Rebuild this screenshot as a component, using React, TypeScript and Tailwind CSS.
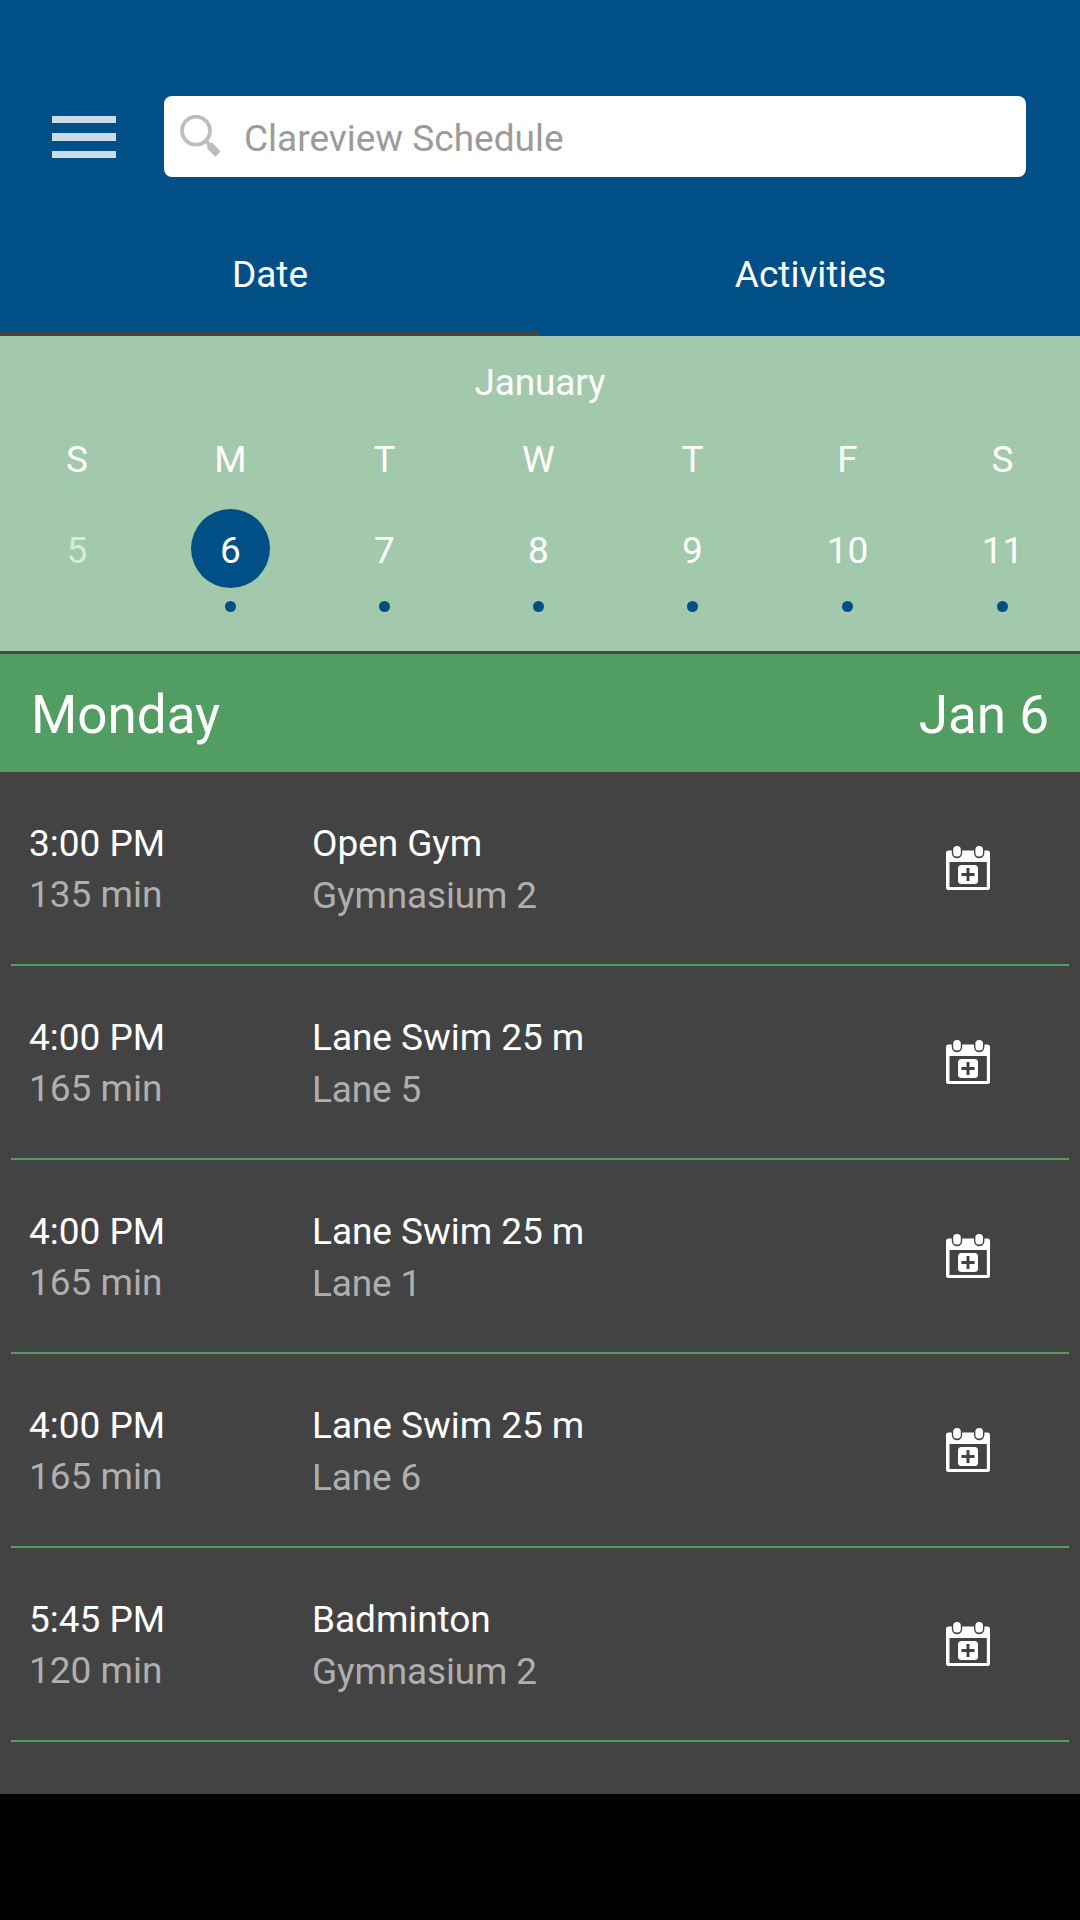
import { useState } from 'react';

const days = [
  { letter: 'S', date: 5, hasEvents: false },
  { letter: 'M', date: 6, hasEvents: true },
  { letter: 'T', date: 7, hasEvents: true },
  { letter: 'W', date: 8, hasEvents: true },
  { letter: 'T', date: 9, hasEvents: true },
  { letter: 'F', date: 10, hasEvents: true },
  { letter: 'S', date: 11, hasEvents: true },
];

const events = [
  { time: '3:00 PM', duration: '135 min', name: 'Open Gym', place: 'Gymnasium 2' },
  { time: '4:00 PM', duration: '165 min', name: 'Lane Swim 25 m', place: 'Lane 5' },
  { time: '4:00 PM', duration: '165 min', name: 'Lane Swim 25 m', place: 'Lane 1' },
  { time: '4:00 PM', duration: '165 min', name: 'Lane Swim 25 m', place: 'Lane 6' },
  { time: '5:45 PM', duration: '120 min', name: 'Badminton', place: 'Gymnasium 2' },
];

function SearchIcon() {
  return (
    <svg width="42" height="43" viewBox="0 0 42 43" fill="none" className="shrink-0">
      <circle cx="16" cy="15.7" r="14" stroke="#bdbdbd" strokeWidth="3.8" />
      <path d="M25.5 25.5 L30 30.5" stroke="#bdbdbd" strokeWidth="4" />
      <rect x="27" y="30.7" width="13" height="7.6" rx="1.6" transform="rotate(45 33.5 34.5)" fill="#bdbdbd" />
    </svg>
  );
}

function CalendarAddIcon() {
  return (
    <svg width="44" height="44" viewBox="0 0 44 44" className="shrink-0">
      <rect x="0" y="4.5" width="44" height="39.5" rx="2.5" fill="#fff" />
      <rect x="3.5" y="16" width="37.3" height="25" fill="#434343" />
      <rect x="5.8" y="-1.2" width="10.4" height="13.4" rx="5.2" fill="#434343" />
      <rect x="28" y="-1.2" width="10.4" height="13.4" rx="5.2" fill="#434343" />
      <rect x="7.2" y="0" width="7.6" height="10.6" rx="3.6" fill="#fff" />
      <rect x="29.4" y="0" width="7.6" height="10.6" rx="3.6" fill="#fff" />
      <rect x="12" y="19" width="20" height="19" rx="3.5" fill="#fff" />
      <path d="M15.4 28.5 H28.6 M22 22 V35" stroke="#434343" strokeWidth="3" />
    </svg>
  );
}

export default function App() {
  const [tab, setTab] = useState('Date');
  const [selected, setSelected] = useState(6);

  return (
    <div className="w-[1080px] h-[1920px] flex flex-col bg-black text-white text-[37px] font-['Roboto',sans-serif] overflow-hidden">
      {/* Header */}
      <header className="h-[336px] shrink-0 bg-[#004f87] pt-24">
        <div className="flex items-center pl-[52px]">
          <button className="flex flex-col gap-[10px] w-16 mr-12 pt-px">
            <span className="h-[7px] bg-[#cbdbe8]" />
            <span className="h-[8px] bg-[#cbdbe8]" />
            <span className="h-[7px] bg-[#cbdbe8]" />
          </button>
          <div className="w-[862px] h-[81px] flex items-center bg-white rounded-lg pl-4">
            <SearchIcon />
            <span className="ml-[22px] pt-1 leading-[50px] text-[#9b9b9b]">Clareview Schedule</span>
          </div>
        </div>

        <nav className="flex mt-[41px]">
          {['Date', 'Activities'].map(name => (
            <button
              key={name}
              onClick={() => setTab(name)}
              className={`w-1/2 h-[118px] border-b-[5px] last:pl-px ${
                tab === name ? 'border-[#434343]' : 'border-transparent'
              }`}
            >
              {name}
            </button>
          ))}
        </nav>
      </header>

      {/* Week strip */}
      <section className="h-[318px] shrink-0 bg-[#a2c9ab] border-b-[3px] border-[#434b3c] pt-[22px]">
        <div className="text-center leading-[50px] tracking-[-0.15px]">January</div>
        <div className="mt-[27px] grid grid-cols-[153px_repeat(4,154px)_156px_155px]">
          {days.map(day => (
            <button key={day.date} onClick={() => setSelected(day.date)} className="group flex flex-col items-center">
              <span className="leading-[50px] pl-px group-last:pl-0">{day.letter}</span>
              <span
                className={`mt-[24px] w-[79px] h-[79px] rounded-full flex items-center justify-center pt-[5px] pl-px group-last:pl-0 ${
                  selected === day.date ? 'bg-[#004f87]' : ''
                } ${day.hasEvents ? '' : 'text-white/60'}`}
              >
                {day.date}
              </span>
              {day.hasEvents && <span className="mt-[13px] w-[11px] h-[11px] rounded-full bg-[#004f87]" />}
            </button>
          ))}
        </div>
      </section>

      {/* Selected day */}
      <div className="h-[118px] shrink-0 flex items-center justify-between bg-[#529e62] px-[31px] pt-[5px] text-[53px]">
        <span>Monday</span>
        <span>Jan 6</span>
      </div>

      {/* Events */}
      <main className="h-[1022px] shrink-0 bg-[#434343] px-[11px]">
        {events.map((event, i) => (
          <div key={i} className="h-[194px] flex items-start border-b-2 border-[#529e62] pl-[18px] leading-[52px]">
            <div className="w-[283px] pt-[46px]">
              <div className="leading-[51px]">{event.time}</div>
              <div className="leading-[51px] text-[#afafaf]">{event.duration}</div>
            </div>
            <div className="w-[634px] pt-[46px]">
              <div className="tracking-[-0.05px]">{event.name}</div>
              <div className="tracking-[-0.15px] text-[#afafaf]">{event.place}</div>
            </div>
            <button className="mt-[74px]">
              <CalendarAddIcon />
            </button>
          </div>
        ))}
      </main>
    </div>
  );
}
